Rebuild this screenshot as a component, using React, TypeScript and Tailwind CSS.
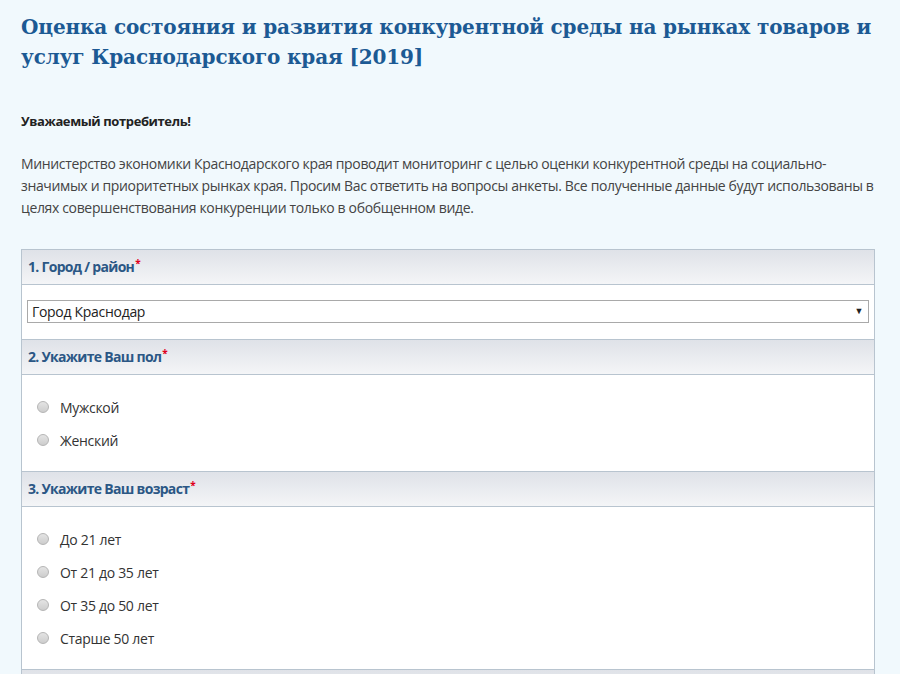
const Req = () => <span className="text-[#e0001b] text-[10px] font-bold leading-none relative -top-[4px] ml-[1px]">*</span>;

const Header = ({ children }: { children: React.ReactNode }) => (
  <div className="h-[35px] flex items-center px-[6px] bg-gradient-to-b from-[#dfe2e8] to-[#f4f5f7] border-b border-[#b8c4cf] text-[#2b5785] font-bold text-[14px] tracking-[-0.7px]">
    {children}
    <Req />
  </div>
);

const Radio = ({ label }: { label: string }) => (
  <label className="flex items-center h-[33px] pl-[15px] text-[14px] text-[#333] tracking-[-0.3px]">
    <span className="w-[12px] h-[12px] rounded-full border border-[#b5b5b5] bg-gradient-to-b from-[#e4e4e4] to-[#cdcdcd] mr-[11px]" />
    {label}
  </label>
);

export default function App() {
  return (
    <div className="min-h-[674px] bg-[#f1f9fd] font-['Open_Sans',sans-serif] text-[#333]">
      <div className="w-[854px] ml-[21px]">
        <h1 className="pt-[12px] text-[#1c5a94] font-['DejaVu_Serif',serif] font-bold text-[20px] leading-[30px] tracking-[-0.15px]">
          Оценка состояния и развития конкурентной среды на рынках товаров и услуг Краснодарского края [2019]
        </h1>
        <p className="mt-[40px] font-bold text-[13px] text-[#222] tracking-[-0.4px]">Уважаемый потребитель!</p>
        <p className="mt-[21px] text-[14px] leading-[22px] text-[#444] tracking-[-0.35px]">
          Министерство экономики Краснодарского края проводит мониторинг с целью оценки конкурентной среды на социально-значимых и приоритетных рынках края. Просим Вас ответить на вопросы анкеты. Все полученные данные будут использованы в целях совершенствования конкуренции только в обобщенном виде.
        </p>
        <div className="mt-[30px] border border-[#b8c4cf] border-b-0 bg-white">
          <Header>1. Город / район</Header>
          <div className="px-[5px] pt-[15px] pb-[16px]">
            <div className="h-[23px] border border-[#a9a9a9] flex items-center justify-between px-[4px] text-[14px] text-[#222] tracking-[-0.3px]">
              <span>Город Краснодар</span>
              <span className="text-[9px] text-[#222] pr-[1px]">▼</span>
            </div>
          </div>
          <div className="border-t border-[#b8c4cf]" />
          <Header>2. Укажите Ваш пол</Header>
          <div className="pt-[16px] pb-[14px]">
            <Radio label="Мужской" />
            <Radio label="Женский" />
          </div>
          <div className="border-t border-[#b8c4cf]" />
          <Header>3. Укажите Ваш возраст</Header>
          <div className="pt-[16px] pb-[14px]">
            <Radio label="До 21 лет" />
            <Radio label="От 21 до 35 лет" />
            <Radio label="От 35 до 50 лет" />
            <Radio label="Старше 50 лет" />
          </div>
          <div className="border-t border-[#b8c4cf]" />
          <div className="h-[35px] bg-gradient-to-b from-[#dfe2e8] to-[#f4f5f7]" />
        </div>
      </div>
    </div>
  );
}
